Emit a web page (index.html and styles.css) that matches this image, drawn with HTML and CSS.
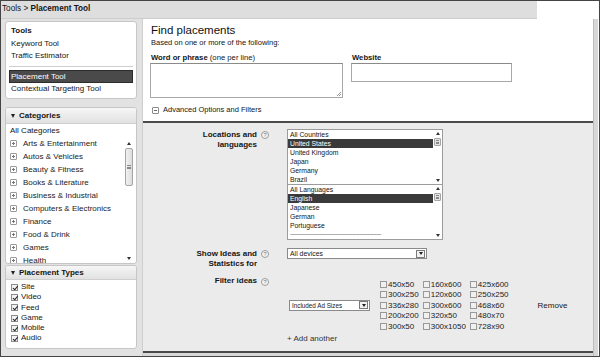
FILE: index.html
```html
<!DOCTYPE html>
<html><head><meta charset="utf-8"><link rel="stylesheet" href="styles.css"></head>
<body>
<div class="frame">
 <div class="top"><div class="crumb">Tools &gt; <b>Placement Tool</b></div></div>
 <div class="body">
  <aside class="side">
   <div class="panel tools">
    <div class="ph">Tools</div>
    <div class="li">Keyword Tool</div>
    <div class="li">Traffic Estimator</div>
    <div class="sep"></div>
    <div class="li sel">Placement Tool</div>
    <div class="li">Contextual Targeting Tool</div>
   </div>
   <div class="panel cats">
    <div class="hd"><span class="tri"></span>Categories</div>
    <div class="allc">All Categories</div>
    <div class="scrollarea">
     <div class="catlist">
      <div class="cat"><span class="pl"></span>Arts &amp; Entertainment</div>
      <div class="cat"><span class="pl"></span>Autos &amp; Vehicles</div>
      <div class="cat"><span class="pl"></span>Beauty &amp; Fitness</div>
      <div class="cat"><span class="pl"></span>Books &amp; Literature</div>
      <div class="cat"><span class="pl"></span>Business &amp; Industrial</div>
      <div class="cat"><span class="pl"></span>Computers &amp; Electronics</div>
      <div class="cat"><span class="pl"></span>Finance</div>
      <div class="cat"><span class="pl"></span>Food &amp; Drink</div>
      <div class="cat"><span class="pl"></span>Games</div>
      <div class="cat"><span class="pl"></span>Health</div>
     </div>
     <div class="vs">
      <span class="up"></span><span class="thumb"><span class="grip"></span></span><span class="fill"></span><span class="dn"></span>
     </div>
    </div>
   </div>
   <div class="panel types">
    <div class="hd"><span class="tri"></span>Placement Types</div>
    <div class="typelist">
     <div class="ty"><span class="cb on"></span>Site</div>
     <div class="ty"><span class="cb on"></span>Video</div>
     <div class="ty"><span class="cb on"></span>Feed</div>
     <div class="ty"><span class="cb on"></span>Game</div>
     <div class="ty"><span class="cb on"></span>Mobile</div>
     <div class="ty"><span class="cb on"></span>Audio</div>
    </div>
   </div>
  </aside>
  <main class="main">
   <section class="find">
    <h1>Find placements</h1>
    <p class="sub">Based on one or more of the following:</p>
    <div class="inputs">
     <div class="fcol">
      <div class="flabel"><b>Word or phrase</b> (one per line)</div>
      <div class="ta"><span class="rgrip"></span></div>
     </div>
     <div class="fcol">
      <div class="flabel"><b>Website</b></div>
      <div class="inp"></div>
     </div>
    </div>
    <div class="advtoggle"><span class="minus"></span>Advanced Options and Filters</div>
   </section>
   <section class="adv">
    <div class="row r1">
     <div class="lbl">Locations and<br>languages</div>
     <div class="hcol"><span class="help">?</span></div>
     <div class="fld">
      <div class="lb lb1">
       <div class="items">
        <div class="it">All Countries</div>
        <div class="it on">United States</div>
        <div class="it">United Kingdom</div>
        <div class="it">Japan</div>
        <div class="it">Germany</div>
        <div class="it">Brazil</div>
       </div>
       <div class="ls"><span class="up"></span><span class="lthumb"><span class="grip"></span></span><span class="fill"></span><span class="dn"></span></div>
      </div>
      <div class="lb lb2">
       <div class="items">
        <div class="it">All Languages</div>
        <div class="it on">English</div>
        <div class="it">Japanese</div>
        <div class="it">German</div>
        <div class="it">Portuguese</div>
        <div class="it"><span class="dash">------------------------------------------------------------------------------</span></div>
       </div>
       <div class="ls"><span class="up"></span><span class="lthumb"><span class="grip"></span></span><span class="fill"></span><span class="dn"></span></div>
      </div>
     </div>
    </div>
    <div class="row r2">
     <div class="lbl">Show Ideas and<br>Statistics for</div>
     <div class="hcol"><span class="help">?</span></div>
     <div class="fld">
      <div class="select s1"><span class="stext">All devices</span><span class="dd"><span class="dtri"></span></span></div>
     </div>
    </div>
    <div class="row r3">
     <div class="lbl">Filter ideas</div>
     <div class="hcol"><span class="help">?</span></div>
     <div class="fld f3">
      <div class="select s2"><span class="stext">Included Ad Sizes</span><span class="dd"><span class="dtri"></span></span></div>
      <div class="sizes">
       <div class="sz"><span class="cb"></span>450x50</div>
       <div class="sz"><span class="cb"></span>160x600</div>
       <div class="sz"><span class="cb"></span>425x600</div>
       <div class="sz"><span class="cb"></span>300x250</div>
       <div class="sz"><span class="cb"></span>120x600</div>
       <div class="sz"><span class="cb"></span>250x250</div>
       <div class="sz"><span class="cb"></span>336x280</div>
       <div class="sz"><span class="cb"></span>300x600</div>
       <div class="sz"><span class="cb"></span>468x60</div>
       <div class="sz"><span class="cb"></span>200x200</div>
       <div class="sz"><span class="cb"></span>320x50</div>
       <div class="sz"><span class="cb"></span>480x70</div>
       <div class="sz"><span class="cb"></span>300x50</div>
       <div class="sz"><span class="cb"></span>300x1050</div>
       <div class="sz"><span class="cb"></span>728x90</div>
      </div>
      <div class="remove">Remove</div>
     </div>
    </div>
    <div class="row r4">
     <div class="lbl"></div>
     <div class="hcol"></div>
     <div class="fld"><span class="add">+ Add another</span></div>
    </div>
   </section>
  </main>
  <div class="rstrip"></div>
 </div>
</div>
</body></html>
```
FILE: styles.css
```css
*{box-sizing:border-box;margin:0;padding:0}
html,body{width:600px;height:357px;overflow:hidden}
body{font-family:"Liberation Sans",Arial,sans-serif;color:#151515;background:#fff}
.frame{width:600px;height:357px;border:1px solid #454545;display:flex;flex-direction:column;background:#fff}
.top{height:18px;display:flex;flex:none}
.crumb{width:536px;height:18px;background:#dedede;border-bottom:1px solid #cdcdcd;font-size:8.2px;line-height:16px;padding-left:1px;white-space:nowrap}
.body{flex:1;display:flex;min-height:0}

/* sidebar */
.side{width:142px;flex:none;background:#e2e2e2;padding:1px 0 0 4px;border-right:1px solid #cfcfcf}
.panel{width:132px;background:#fff;border:1px solid #c6c6c6;border-radius:3px;font-size:8px;overflow:hidden}
.tools{margin-top:1px;height:78px;padding:3px 3px 0}
.ph{font-weight:bold;line-height:11px;padding-left:2px;margin-bottom:2px}
.li{line-height:12px;height:12px;padding-left:2px;white-space:nowrap}
.sep{border-top:1px solid #cfcfcf;margin:4px 0 3px}
.li.sel{background:#4a4a4a;color:#fff;line-height:11px;height:13px;border:1px solid #2c2c2c;padding-left:1px}
.cats{margin-top:8px;height:157px;display:flex;flex-direction:column}
.types{margin-top:1px;height:84px}
.hd{height:16px;line-height:15px;border-bottom:1px solid #cfcfcf;background:linear-gradient(#f6f6f6,#e1e1e1);font-weight:bold;padding-left:5px;display:flex;align-items:center;flex:none}
.types .hd{height:14px;line-height:13px}
.tri{width:0;height:0;border-left:2.5px solid transparent;border-right:2.5px solid transparent;border-top:4px solid #222;margin-right:4px}
.allc{line-height:13px;height:13px;padding-left:4px;flex:none}
.scrollarea{flex:1;display:flex;min-height:0}
.catlist{flex:1;overflow:hidden;color:#222}
.cat{line-height:13px;height:13px;padding-left:4px;display:flex;align-items:center;white-space:nowrap}
.pl{width:7px;height:7px;border:1px solid #9a9a9a;border-radius:1px;margin-right:6px;flex:none;position:relative;background:#fff}
.pl::before{content:"";position:absolute;left:1px;top:2px;width:3px;height:1px;background:#777}
.pl::after{content:"";position:absolute;left:2px;top:1px;width:1px;height:3px;background:#777}
.vs{width:9px;margin:1px 3px 1px 0;display:flex;flex-direction:column;align-items:center}
.up{width:0;height:0;border-left:2px solid transparent;border-right:2px solid transparent;border-bottom:3px solid #333;margin-top:4px;flex:none}
.dn{width:0;height:0;border-left:2px solid transparent;border-right:2px solid transparent;border-top:3px solid #333;margin-bottom:2px;flex:none}
.fill{flex:1}
.thumb{width:8px;height:38px;margin-top:3px;border:1px solid #a5a5a5;border-radius:2px;background:linear-gradient(90deg,#f2f2f2,#dcdcdc);display:flex;align-items:center;justify-content:center;flex:none}
.grip{width:4px;height:4px;border-top:1px solid #888;border-bottom:1px solid #888;position:relative}
.grip::after{content:"";position:absolute;left:0;right:0;top:1px;height:1px;background:#888}
.typelist{padding-top:2px}
.ty{height:10.3px;line-height:10.3px;padding-left:5px;display:flex;align-items:center}
.cb{width:7px;height:7px;border:1px solid #8c8c8c;background:#f3f3f3;flex:none;margin-right:3px;position:relative}
.cb.on::after{content:"";position:absolute;left:1.5px;top:0;width:2px;height:3.5px;border-right:1px solid #222;border-bottom:1px solid #222;transform:rotate(40deg)}

/* main */
.main{width:450px;flex:none;display:flex;flex-direction:column;background:#d8d8d8}
.find{height:102px;flex:none;background:#fff;padding:4px 0 0 7px}
.find h1{font-size:11.5px;font-weight:normal;line-height:14px;padding-left:1px;color:#111}
.sub{font-size:7.5px;line-height:9px;margin-top:1px;padding-left:1px}
.inputs{display:flex;gap:8px;margin-top:6px}
.flabel{font-size:7.7px;line-height:10px;padding-left:1px;white-space:nowrap}
.ta{width:193px;height:35px;border:1px solid #a8a8a8;border-top-color:#8a8a8a;background:#fff;display:flex;align-items:flex-end;justify-content:flex-end}
.rgrip{width:4px;height:4px;margin:0 1px 1px 0;background:linear-gradient(135deg,transparent 45%,#999 45%,#999 55%,transparent 55%,transparent 70%,#999 70%,#999 80%,transparent 80%)}
.inp{width:161px;height:19px;border:1px solid #a8a8a8;border-top-color:#8a8a8a;background:#fff}
.advtoggle{margin-top:7px;line-height:10px;font-size:7.5px;display:flex;align-items:center;padding-left:2px}
.minus{width:7px;height:7px;border:1px solid #8a8a8a;border-radius:1px;margin-right:4px;position:relative}
.minus::after{content:"";position:absolute;left:1px;top:2px;width:3px;height:1px;background:#666}

.adv{height:232px;flex:none;border-top:2px solid #4a4a4a;border-bottom:2px solid #4a4a4a;background:#ebebeb;padding-top:6px;font-size:8px}
.row{display:flex}
.lbl{width:114px;flex:none;text-align:right;font-weight:bold;line-height:10px;padding-top:1px}
.hcol{width:30px;flex:none;padding-left:4px}
.help{display:flex;width:8px;height:8px;margin-top:2px;border:1px solid #9c9c9c;border-radius:50%;font-size:5.5px;line-height:6px;color:#777;align-items:center;justify-content:center;background:#f4f4f4}
.fld{flex:1}
.lb{width:156px;display:flex;background:#fff;border:1px solid #9c9c9c}
.lb1{border-bottom:0;height:55px}
.lb2{height:56px}
.items{flex:1;overflow:hidden}
.it{height:9px;line-height:9px;font-size:6.8px;padding-left:2px;white-space:nowrap;overflow:hidden}
.it.on{background:#3a3a3a;color:#fff}
.dash{display:block;width:104px;overflow:hidden;letter-spacing:-0.5px;color:#444;font-size:5px}
.ls{width:9px;display:flex;flex-direction:column;align-items:center}
.ls .up{margin-top:2px}
.lthumb{width:7px;height:8px;margin-top:3px;border:1px solid #a5a5a5;border-radius:1px;background:#e4e4e4;display:flex;align-items:center;justify-content:center}
.lthumb .grip{width:3px;height:4px}
.r2{margin-top:8px}
.select{height:11px;border:1px solid #8a8a8a;background:#fff;display:flex;align-items:center;font-size:6.9px}
.stext{flex:1;padding-left:2px;white-space:nowrap}
.dd{width:9px;height:8px;border:1px solid #7a7a7a;margin-right:1px;display:flex;align-items:center;justify-content:center;background:#f2f2f2}
.dtri{width:0;height:0;border-left:2px solid transparent;border-right:2px solid transparent;border-top:3px solid #222}
.s1{width:140px}
.s2{width:81px;margin-left:2px;font-size:6.3px}
.r3{margin-top:7px}
.r3 .lbl{padding-top:0}
.f3{display:flex;align-items:center;padding-top:3px}
.sizes{display:grid;grid-template-columns:repeat(3,auto);column-gap:4px;margin-left:10px}
.sz{height:10.5px;display:flex;align-items:center;white-space:nowrap;color:#222}
.sz .cb{margin-right:1px;background:#f0f0f0;border-color:#999}
.remove{margin-left:29px}
.r4{margin-top:2.5px}
.add{line-height:10px;color:#333}
.rstrip{width:5px;flex:none;background:#d7d7d7;border-left:1px solid #bdbdbd}
```
